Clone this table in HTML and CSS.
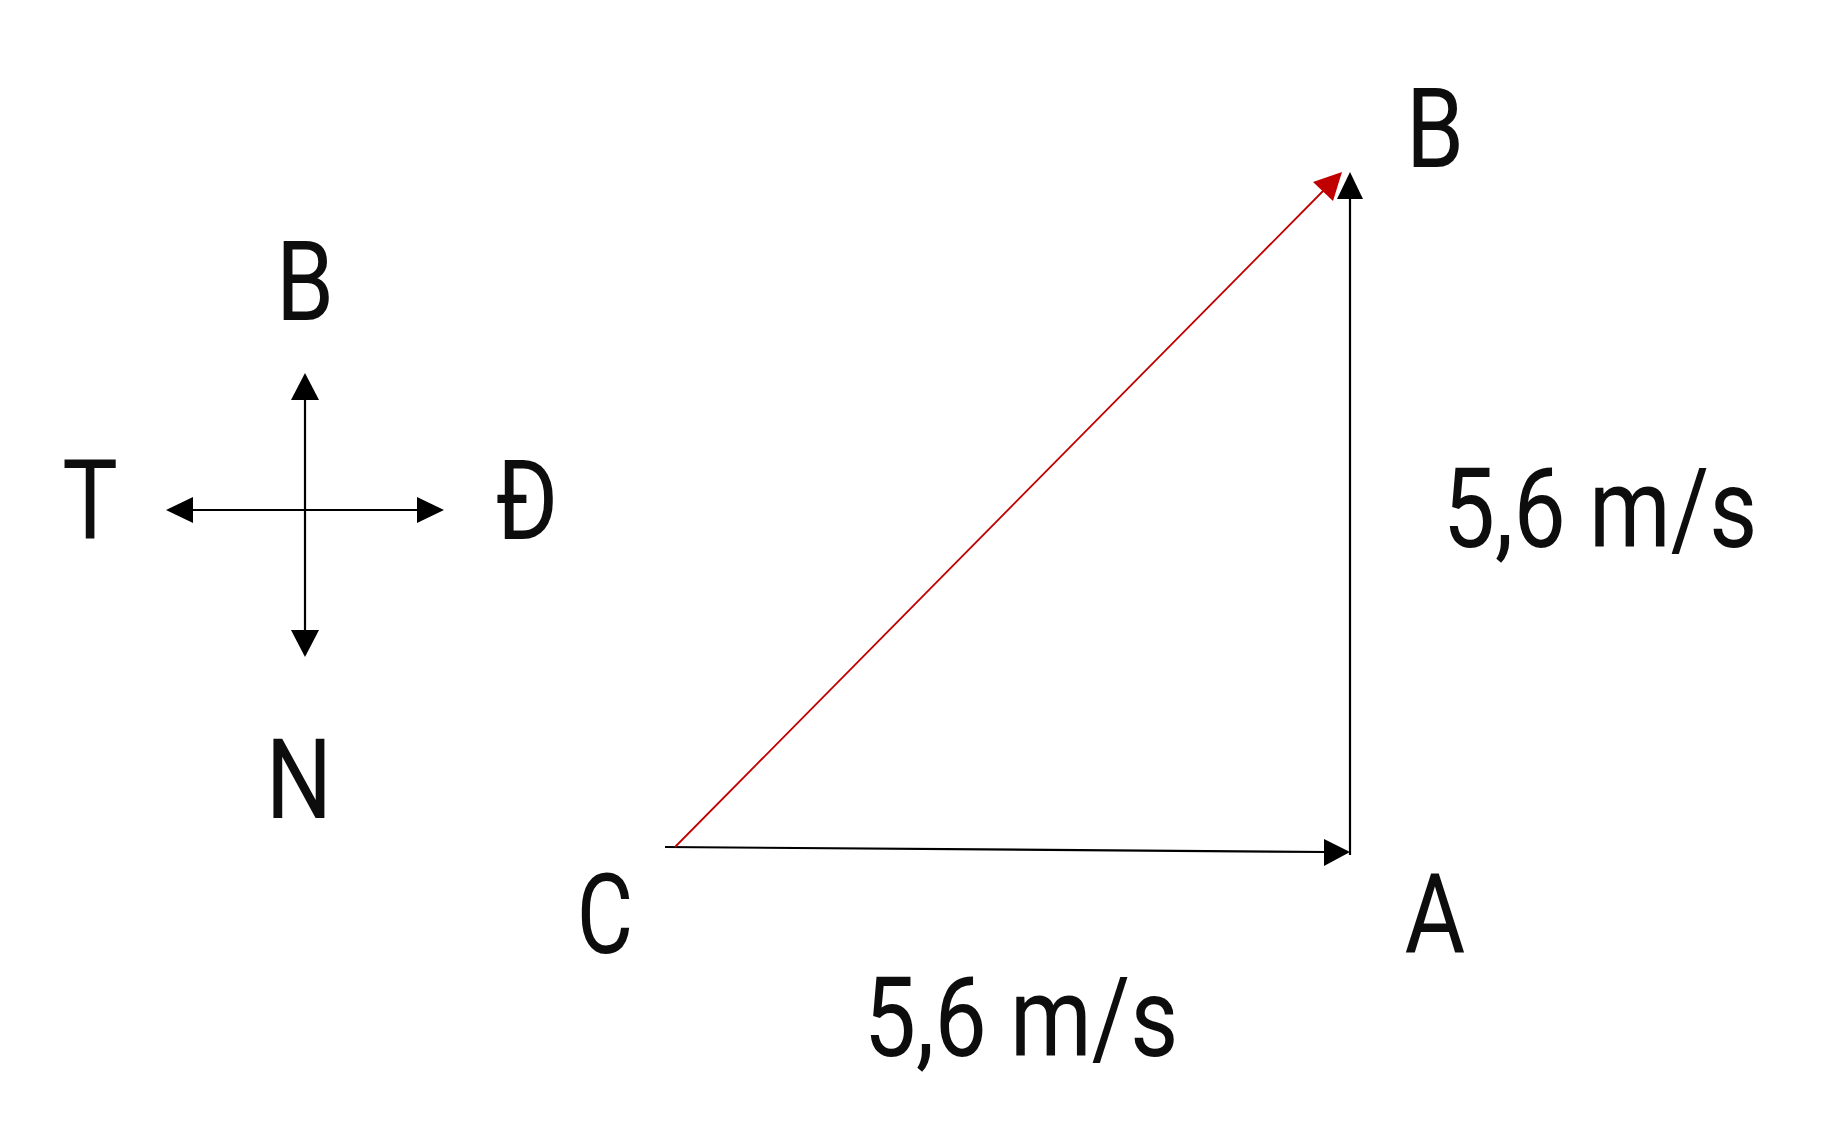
FILE: index.html
```html
<!DOCTYPE html>
<html lang="vi">
<head>
<meta charset="utf-8">
<title>Vector diagram</title>
<link rel="stylesheet" href="styles.css">
</head>
<body>
<main class="canvas">
<svg class="diagram" width="1847" height="1145" viewBox="0 0 1847 1145" xmlns="http://www.w3.org/2000/svg">
  <!-- compass -->
  <g class="compass">
    <line class="ink-line" x1="305" y1="398" x2="305" y2="632"/>
    <line class="ink-line" x1="191" y1="510" x2="419" y2="510"/>
    <polygon class="ink-fill" points="305,373 291,400 319,400"/>
    <polygon class="ink-fill" points="305,657 291,630 319,630"/>
    <polygon class="ink-fill" points="166,510 193,497 193,523"/>
    <polygon class="ink-fill" points="444,510 417,497 417,523"/>
  </g>
  <text class="label" transform="translate(305 320) scale(0.84 1)">B</text>
  <text class="label" transform="translate(90 539) scale(0.84 1)">T</text>
  <text class="label" transform="translate(527 539) scale(0.84 1)">Đ</text>
  <text class="label" transform="translate(299 818) scale(0.84 1)">N</text>

  <!-- triangle -->
  <line class="ink-line" x1="665" y1="847" x2="1326" y2="852"/>
  <polygon class="ink-fill" points="1350,852 1324,839 1324,866"/>
  <line class="ink-line" x1="1350" y1="855" x2="1350" y2="197"/>
  <polygon class="ink-fill" points="1350,172 1337,199 1363,199"/>
  <line class="red-line" x1="675" y1="847" x2="1324" y2="190"/>
  <polygon class="red-fill" points="1342,172 1313,182 1333,201"/>

  <text class="label" transform="translate(1435 167) scale(0.84 1)">B</text>
  <text class="label" transform="translate(605 953) scale(0.78 1)">C</text>
  <text class="label" transform="translate(1435 953) scale(0.84 1)">A</text>
  <text class="label" transform="translate(1600 547) scale(0.84 1)">5,6 m/s</text>
  <text class="label" transform="translate(1021 1056) scale(0.84 1)">5,6 m/s</text>
</svg>
</main>
</body>
</html>
```

FILE: styles.css
```css
html, body {
  margin: 0;
  padding: 0;
  background: #ffffff;
}

.canvas {
  width: 1847px;
  height: 1145px;
  overflow: hidden;
}

.diagram {
  display: block;
}

.label {
  font-family: Roboto, "Liberation Sans", sans-serif;
  font-size: 111px;
  font-weight: 400;
  fill: #0d0d0d;
  text-anchor: middle;
}

.ink-line {
  stroke: #000000;
  stroke-width: 2.2;
  fill: none;
}

.ink-fill {
  fill: #000000;
}

.red-line {
  stroke: #c00000;
  stroke-width: 1.8;
  fill: none;
}

.red-fill {
  fill: #c00000;
}
```
